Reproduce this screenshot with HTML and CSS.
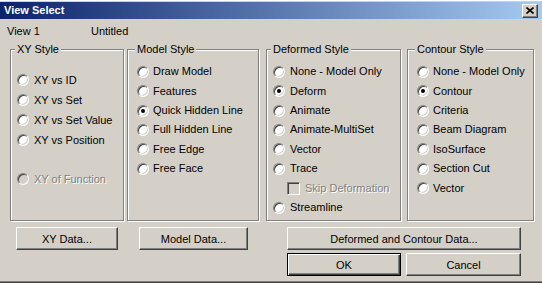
FILE: index.html
```html
<!DOCTYPE html>
<html lang="en">
<head>
    <meta charset="UTF-8">
    <title>View Select</title>
    <link rel="stylesheet" href="styles.css">
</head>
<body>
    <div class="window">
        <div class="titlebar">
            <span class="title">View Select</span>
            <button class="close-btn" aria-label="Close">
                <svg width="8" height="7" viewBox="0 0 8 7">
                    <path d="M0.5 0.5 L7.5 6.5 M7.5 0.5 L0.5 6.5" stroke="#000" stroke-width="1.6" fill="none"/>
                </svg>
            </button>
        </div>

        <div class="info">
            <span class="view-name">View 1</span>
            <span>Untitled</span>
        </div>

        <div class="groups">
            <!-- XY Style -->
            <div class="group group-xy">
                <span class="group-title">XY Style</span>
                <div class="options options-xy">
                    <div class="option"><span class="radio"></span>XY vs ID</div>
                    <div class="option"><span class="radio"></span>XY vs Set</div>
                    <div class="option"><span class="radio"></span>XY vs Set Value</div>
                    <div class="option"><span class="radio"></span>XY vs Position</div>
                    <div class="option option-gap disabled"><span class="radio"></span>XY of Function</div>
                </div>
            </div>

            <!-- Model Style -->
            <div class="group group-model wide">
                <span class="group-title">Model Style</span>
                <div class="options">
                    <div class="option"><span class="radio"></span>Draw Model</div>
                    <div class="option"><span class="radio"></span>Features</div>
                    <div class="option"><span class="radio checked"></span>Quick Hidden Line</div>
                    <div class="option"><span class="radio"></span>Full Hidden Line</div>
                    <div class="option"><span class="radio"></span>Free Edge</div>
                    <div class="option"><span class="radio"></span>Free Face</div>
                </div>
            </div>

            <!-- Deformed Style -->
            <div class="group group-deformed">
                <span class="group-title">Deformed Style</span>
                <div class="options">
                    <div class="option"><span class="radio"></span>None - Model Only</div>
                    <div class="option"><span class="radio checked"></span>Deform</div>
                    <div class="option"><span class="radio"></span>Animate</div>
                    <div class="option"><span class="radio"></span>Animate-MultiSet</div>
                    <div class="option"><span class="radio"></span>Vector</div>
                    <div class="option"><span class="radio"></span>Trace</div>
                    <div class="option option-sub disabled"><span class="checkbox"></span>Skip Deformation</div>
                    <div class="option"><span class="radio"></span>Streamline</div>
                </div>
            </div>

            <!-- Contour Style -->
            <div class="group group-contour wide">
                <span class="group-title">Contour Style</span>
                <div class="options">
                    <div class="option"><span class="radio"></span>None - Model Only</div>
                    <div class="option"><span class="radio checked"></span>Contour</div>
                    <div class="option"><span class="radio"></span>Criteria</div>
                    <div class="option"><span class="radio"></span>Beam Diagram</div>
                    <div class="option"><span class="radio"></span>IsoSurface</div>
                    <div class="option"><span class="radio"></span>Section Cut</div>
                    <div class="option"><span class="radio"></span>Vector</div>
                </div>
            </div>
        </div>

        <div class="actions">
            <div class="actions-left">
                <button class="btn btn-xy">XY Data...</button>
                <button class="btn btn-model">Model Data...</button>
            </div>
            <div class="actions-right">
                <button class="btn btn-wide">Deformed and Contour Data...</button>
                <div class="actions-row">
                    <button class="btn btn-default">OK</button>
                    <button class="btn btn-cancel">Cancel</button>
                </div>
            </div>
        </div>
    </div>
</body>
</html>
```

FILE: styles.css
```css
:root {
    --face: #d4d0c8;
    --shadow: #808080;
    --dark: #404040;
    --light: #fff;
}

* {
    box-sizing: border-box;
    margin: 0;
    padding: 0;
}

body {
    background-color: var(--face);
    font-family: "Liberation Sans", Arial, sans-serif;
    font-size: 11px;
    line-height: 13px;
    color: #000;
}

.window {
    width: 542px;
    height: 283px;
    background-color: var(--face);
    padding-top: 2px;
    box-shadow: inset 0 1px 0 var(--light), inset 0 -1px 0 var(--dark), inset 0 -2px 0 var(--shadow);
}

/* Title bar */
.titlebar {
    height: 17px;
    display: flex;
    align-items: center;
    justify-content: space-between;
    padding: 0 4px 0 4px;
    background: linear-gradient(to right, #0a246a, #a6caf0);
}

.title {
    color: #fff;
    font-weight: bold;
}

.close-btn {
    width: 16px;
    height: 14px;
    margin-top: 1px;
    display: flex;
    align-items: center;
    justify-content: center;
    background-color: var(--face);
    border: 1px solid;
    border-color: var(--light) var(--dark) var(--dark) var(--light);
    box-shadow: inset -1px -1px 0 var(--shadow);
}

.close-btn svg {
    display: block;
    margin: 0 1px 1px 0;
}

/* View line */
.info {
    display: flex;
    margin-top: 6px;
    padding-left: 7px;
}

.view-name {
    width: 84px;
}

/* Group boxes */
.groups {
    display: flex;
    margin: 11px 0 0 10px;
}

.group {
    height: 172px;
    border: 1px solid var(--shadow);
    box-shadow: 1px 1px 0 var(--light), inset 1px 1px 0 var(--light);
    padding-left: 6px;
}

.group.wide {
    padding-left: 9px;
}

.group-xy { width: 114px; }
.group-model { width: 132px; margin-left: 3px; }
.group-deformed { width: 135px; margin-left: 7px; }
.group-contour { width: 127px; margin-left: 6px; }

.group-title {
    display: block;
    width: fit-content;
    margin: -7px 0 0 -2px;
    padding: 0 2px;
    background-color: var(--face);
}

.options {
    margin-top: 6px;
}

.options-xy {
    margin-top: 14px;
}

.option {
    display: flex;
    align-items: center;
    height: 19.43px;
    white-space: nowrap;
}

.options-xy .option {
    height: 20px;
}

.options-xy .option-gap {
    margin-top: 19px;
}

.option-sub {
    padding-left: 14px;
}

.disabled {
    color: var(--shadow);
    text-shadow: 1px 1px 0 var(--light);
}

/* Radio buttons */
.radio {
    position: relative;
    flex: none;
    width: 12px;
    height: 12px;
    margin-right: 5px;
    border-radius: 50%;
    background-color: #fff;
    border: 1px solid;
    border-color: var(--shadow) var(--light) var(--light) var(--shadow);
    box-shadow: inset 1px 1px 0 var(--dark), inset -1px -1px 0 var(--face);
}

.wide .radio {
    margin-right: 4px;
}

.radio.checked::after {
    content: "";
    position: absolute;
    left: 3px;
    top: 3px;
    width: 4px;
    height: 4px;
    border-radius: 50%;
    background-color: #000;
}

.disabled .radio {
    background-color: var(--face);
}

/* Checkbox */
.checkbox {
    flex: none;
    width: 13px;
    height: 13px;
    margin-right: 5px;
    background-color: var(--face);
    border: 1px solid;
    border-color: var(--shadow) var(--light) var(--light) var(--shadow);
    box-shadow: inset 1px 1px 0 var(--dark), inset -1px -1px 0 var(--face);
}

/* Buttons */
.actions {
    display: flex;
    margin-top: 6px;
}

.actions-left {
    display: flex;
    gap: 21px;
    margin-left: 16px;
    align-self: flex-start;
}

.actions-right {
    display: flex;
    flex-direction: column;
    gap: 3px;
    margin-left: 39px;
}

.actions-row {
    display: flex;
    gap: 5px;
}

.btn {
    height: 23px;
    font-family: inherit;
    font-size: 11px;
    color: #000;
    background-color: var(--face);
    border: 1px solid;
    border-color: var(--light) var(--dark) var(--dark) var(--light);
    box-shadow: inset -1px -1px 0 var(--shadow);
}

.btn-xy { width: 102px; }
.btn-model { width: 109px; }
.btn-wide { width: 234px; }
.btn-cancel { width: 115px; }

.btn-default {
    width: 114px;
    border: 1px solid #000;
    box-shadow: inset 1px 1px 0 var(--light), inset -1px -1px 0 var(--dark), inset -2px -2px 0 var(--shadow);
}
```
